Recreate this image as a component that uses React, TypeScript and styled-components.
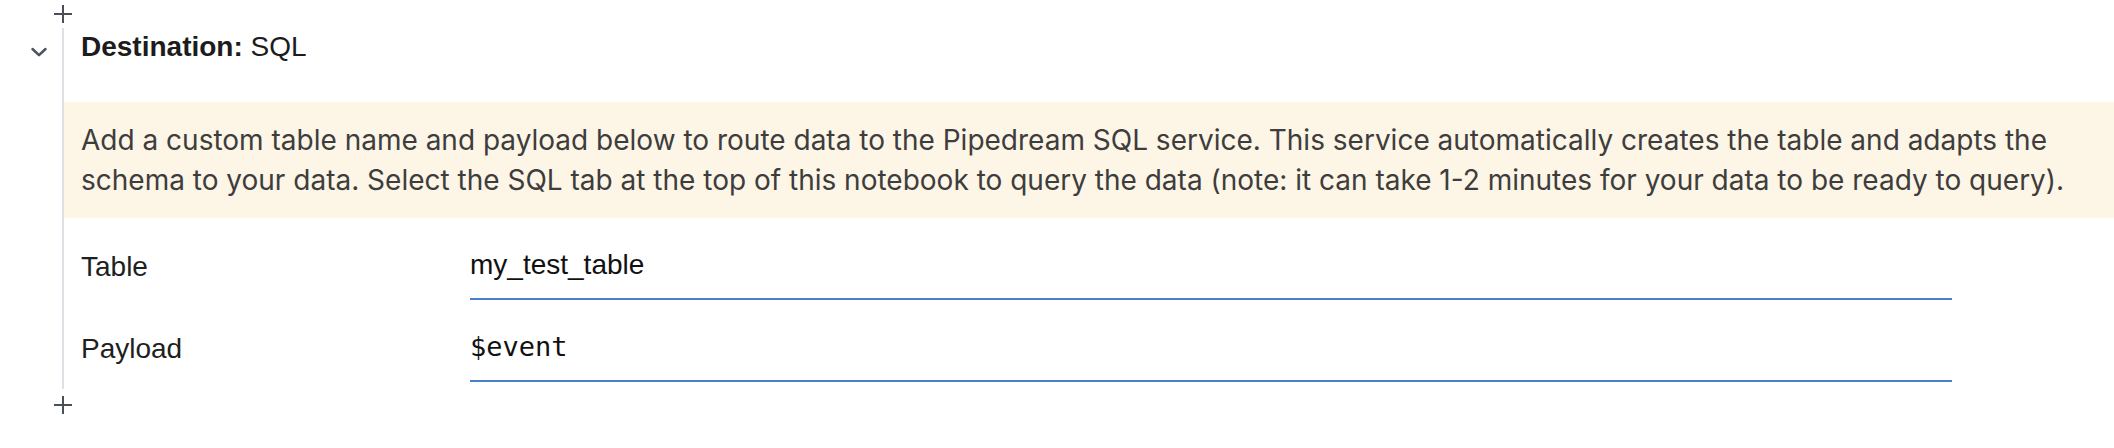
import styled, { createGlobalStyle } from 'styled-components';

const GlobalStyle = createGlobalStyle`
  html, body {
    margin: 0;
    padding: 0;
    background: #ffffff;
  }
  body {
    font-family: "Liberation Sans", Arial, sans-serif;
  }
`;

const Page = styled.div`
  display: flex;
  flex-direction: column;
  width: 2114px;
`;

const AddRow = styled.div<{ $top?: boolean }>`
  display: flex;
  height: ${p => (p.$top ? '28px' : '32px')};
  padding-left: 53px;
  align-items: ${p => (p.$top ? 'center' : 'flex-start')};
  padding-top: ${p => (p.$top ? '0' : '6px')};
  box-sizing: border-box;
`;

const Cell = styled.div`
  display: flex;
`;

const Gutter = styled.div`
  width: 62px;
  flex-shrink: 0;
  padding-left: 30px;
  padding-top: 16px;
  box-sizing: border-box;
`;

const Body = styled.div`
  flex: 1;
  border-left: 2px solid #dde1e6;
  padding-bottom: 7px;
`;

const Title = styled.div`
  padding: 2px 0 0 17px;
  margin-bottom: 38px;
  font-size: 28px;
  line-height: 34px;
  color: #1c1c1c;
  b {
    font-weight: 700;
  }
`;

const Note = styled.p`
  margin: 0;
  background: #fdf5e6;
  padding: 18px 18px 18px 17px;
  font-family: Inter, "Liberation Sans", sans-serif;
  font-size: 28px;
  line-height: 40px;
  color: #3d3d3d;
`;

const Field = styled.div`
  display: grid;
  grid-template-columns: 389px 1482px;
  align-items: end;
  height: 82px;
  padding-left: 17px;
`;

const Label = styled.label`
  padding-bottom: 16px;
  font-size: 28px;
  line-height: 34px;
  color: #1f1f1f;
`;

const Input = styled.div<{ $mono?: boolean }>`
  padding-bottom: 16px;
  border-bottom: 2px solid #4a80c9;
  font-family: ${p => (p.$mono ? '"DejaVu Sans Mono", Menlo, monospace' : '"Liberation Sans", Arial, sans-serif')};
  font-size: ${p => (p.$mono ? '27px' : '28px')};
  line-height: 34px;
  color: #111111;
`;

const Plus = () => (
  <svg width="20" height="20" viewBox="0 0 20 20">
    <path d="M10 1v18M1 10h18" stroke="#4a4f57" strokeWidth="2" fill="none" />
  </svg>
);

const Chevron = () => (
  <svg width="18" height="12" viewBox="0 0 18 12">
    <path d="M2.5 3l6.5 6.2L15.5 3" stroke="#4b5260" strokeWidth="2.5" fill="none" strokeLinecap="round" strokeLinejoin="round" />
  </svg>
);

export default function App() {
  return (
    <>
      <GlobalStyle />
      <Page>
        <AddRow $top>
          <Plus />
        </AddRow>
        <Cell>
          <Gutter>
            <Chevron />
          </Gutter>
          <Body>
            <Title>
              <b>Destination:</b> SQL
            </Title>
            <Note>
              Add a custom table name and payload below to route data to the Pipedream SQL service. This service
              automatically creates the table and adapts the schema to your data. Select the SQL tab at the top of
              this notebook to query the data (note: it can take 1-2 minutes for your data to be ready to query).
            </Note>
            <Field>
              <Label>Table</Label>
              <Input>my_test_table</Input>
            </Field>
            <Field>
              <Label>Payload</Label>
              <Input $mono>$event</Input>
            </Field>
          </Body>
        </Cell>
        <AddRow>
          <Plus />
        </AddRow>
      </Page>
    </>
  );
}
